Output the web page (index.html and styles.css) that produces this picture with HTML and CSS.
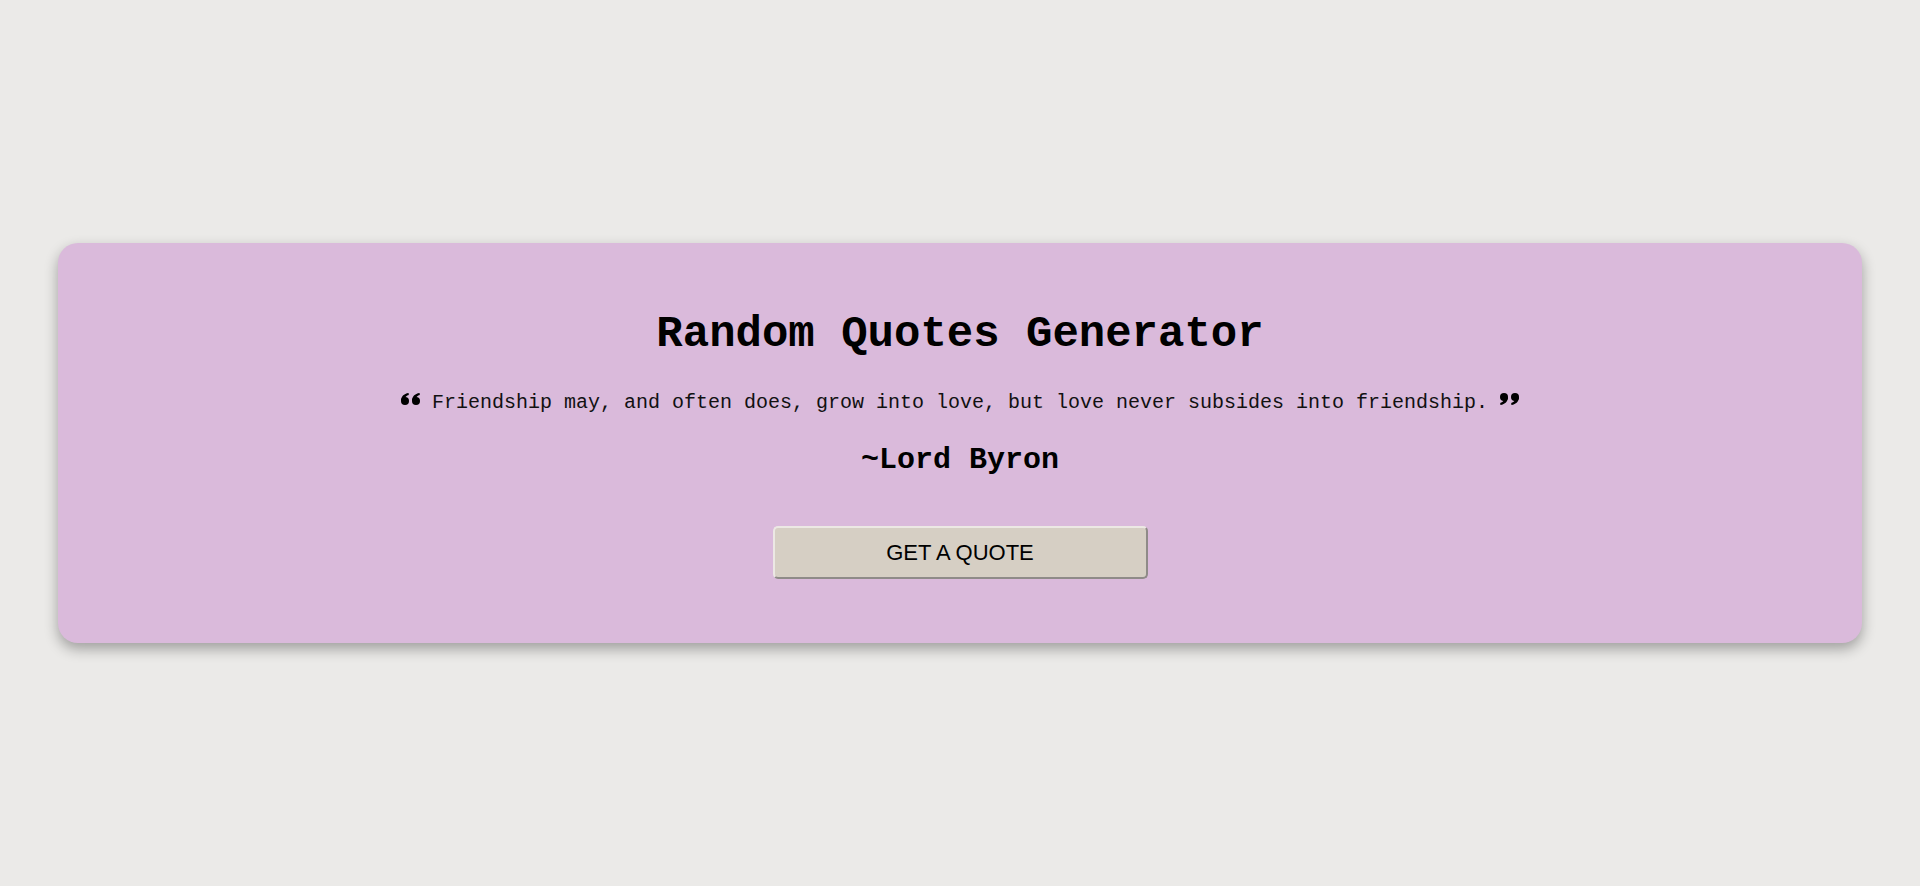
FILE: index.html
```html
<!DOCTYPE html>
<html lang="en">
<head>
<meta charset="utf-8">
<title>Random Quotes Generator</title>
<link rel="stylesheet" href="styles.css">
</head>
<body>
<main class="page">
  <section class="card">
    <h1 class="title">Random Quotes Generator</h1>
    <p class="quote">
      <svg class="qicon" width="19" height="12" viewBox="0 0 19 12" aria-hidden="true">
        <g fill="#000">
          <circle cx="4" cy="8" r="4"/>
          <path d="M0 8 C0 3.6 2.8 0.6 7.6 0 L7.8 2.1 C5.4 2.6 4.1 4.2 4 6 Z"/>
          <circle cx="15" cy="8" r="4"/>
          <path d="M11 8 C11 3.6 13.8 0.6 18.6 0 L18.8 2.1 C16.4 2.6 15.1 4.2 15 6 Z"/>
        </g>
      </svg> Friendship may, and often does, grow into love, but love never subsides into friendship. <svg class="qicon" width="19" height="12" viewBox="0 0 19 12" aria-hidden="true">
        <g fill="#000" transform="rotate(180 9.5 6)">
          <circle cx="4" cy="8" r="4"/>
          <path d="M0 8 C0 3.6 2.8 0.6 7.6 0 L7.8 2.1 C5.4 2.6 4.1 4.2 4 6 Z"/>
          <circle cx="15" cy="8" r="4"/>
          <path d="M11 8 C11 3.6 13.8 0.6 18.6 0 L18.8 2.1 C16.4 2.6 15.1 4.2 15 6 Z"/>
        </g>
      </svg>
    </p>
    <h2 class="author">~Lord Byron</h2>
    <button class="btn" type="button">GET A QUOTE</button>
  </section>
</main>
</body>
</html>
```

FILE: styles.css
```css
html, body {
  margin: 0;
  padding: 0;
  height: 100%;
}

body {
  background: #ebeae8;
  font-family: "Liberation Mono", "Courier New", monospace;
  color: #000;
}

.page {
  height: 100%;
  display: flex;
  align-items: center;
  justify-content: center;
}

.card {
  width: 1804px;
  box-sizing: border-box;
  background: #dabadb;
  border-radius: 20px;
  box-shadow: 0 6px 14px rgba(0, 0, 0, 0.32);
  padding: 66px 20px 64px;
  display: flex;
  flex-direction: column;
  align-items: center;
  text-align: center;
}

.title {
  margin: 0;
  font-size: 44px;
  line-height: 50px;
  font-weight: bold;
}

.quote {
  margin: 32px 0 0;
  font-size: 20px;
  line-height: 23px;
  color: #111;
}

.qicon {
  vertical-align: 3px;
}

.author {
  margin: 29px 0 0;
  font-size: 30px;
  line-height: 34px;
  font-weight: bold;
}

.btn {
  margin-top: 49px;
  width: 375px;
  height: 53px;
  box-sizing: border-box;
  background: #d6cfc4;
  border: 2px solid;
  border-color: #ece8e4 #8f8b88 #8f8b88 #ece8e4;
  border-radius: 5px;
  font-family: "Liberation Sans", Arial, sans-serif;
  font-size: 22px;
  color: #000;
  padding: 0;
  cursor: pointer;
}
```
